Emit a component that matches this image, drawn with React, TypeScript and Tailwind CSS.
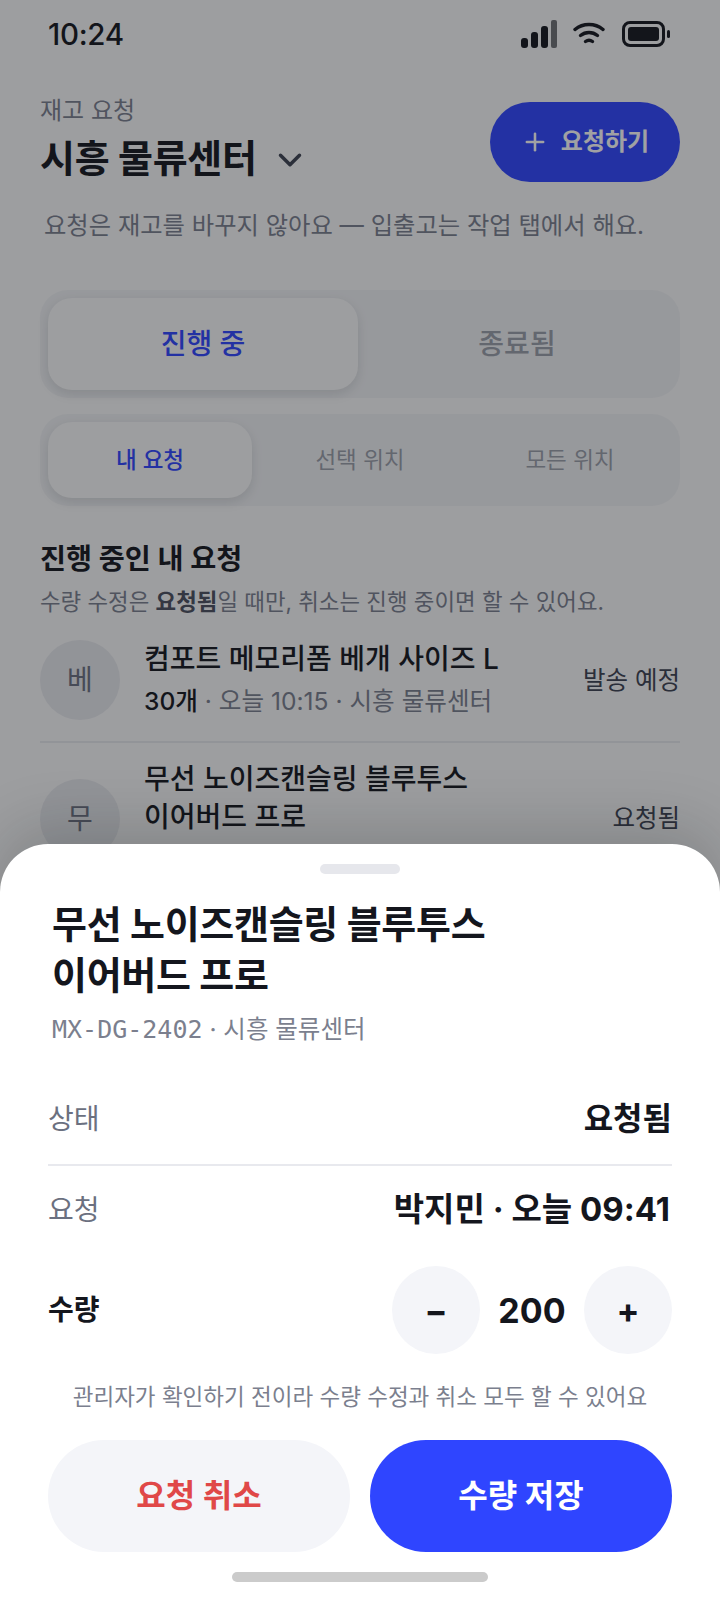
import { ChevronDown, Plus } from "lucide-react"

const sans = "font-[Inter,'Noto_Sans_CJK_KR',sans-serif]"

function StatusIcons() {
  return (
    <div className="flex items-center gap-[16px]">
      <svg width="36" height="28" viewBox="0 0 36 28" fill="#14161d">
        <rect x="0" y="18" width="7" height="10" rx="3" />
        <rect x="10" y="12" width="7" height="16" rx="3" />
        <rect x="20" y="6" width="7" height="22" rx="3" />
        <rect x="30" y="0" width="6" height="28" rx="2" fill="#6f7074" />
      </svg>
      <svg width="32" height="24" viewBox="0 0 32 24" fill="none" stroke="#14161d" strokeWidth="3.4" strokeLinecap="round">
        <path d="M2 7.5C10 .8 22 .8 30 7.5" />
        <path d="M7.5 13.5C12.5 9.5 19.5 9.5 24.5 13.5" />
        <path d="M12.5 19.5C14.5 18 17.5 18 19.5 19.5" />
      </svg>
      <svg width="48" height="26" viewBox="0 0 48 26" fill="none" className="ml-[1px]">
        <rect x="1.5" y="1.5" width="40" height="23" rx="6.5" stroke="#14161d" strokeWidth="3" />
        <rect x="6" y="6" width="31" height="14" rx="3" fill="#14161d" />
        <rect x="45" y="9" width="3" height="8" rx="1.5" fill="#14161d" />
      </svg>
    </div>
  )
}

function Avatar({ label }: { label: string }) {
  return (
    <div className="flex h-[80px] w-[80px] shrink-0 items-center justify-center rounded-full bg-[#e8e9ed] text-[28px] text-[#6b7080]">
      {label}
    </div>
  )
}

export default function App() {
  return (
    <div className={`relative h-[1600px] w-[720px] overflow-hidden bg-[#fafafa] ${sans}`}>
      <div className="flex h-[68px] items-center justify-between pl-[48px] pr-[50px]">
        <span className="text-[29.5px] font-medium tracking-[-0.3px] text-[#14161d]">10:24</span>
        <StatusIcons />
      </div>

      <div className="px-[40px]">
        <div className="flex items-start justify-between pt-[28px]">
          <div>
            <div className="text-[24px] leading-[30px] text-[#7b7f8e]">재고 요청</div>
            <div className="mt-[8px] flex items-center">
              <span className="text-[38px] font-bold leading-[48px] tracking-[-0.3px] text-[#14161d]">시흥 물류센터</span>
              <ChevronDown className="ml-[14px] mt-[3px] text-[#3d4150]" size={38} strokeWidth={2.2} />
            </div>
          </div>
          <div className="mt-[6px] flex h-[80px] w-[190px] items-center justify-center gap-[12px] rounded-full bg-[#2f45ff] text-[24px] font-semibold text-white">
            <Plus size={28} strokeWidth={2.2} />
            <span>요청하기</span>
          </div>
        </div>
        <p className="mt-[27px] pl-[4px] text-[24.3px] leading-[32px] text-[#7b7f8e]">
          요청은 재고를 바꾸지 않아요 — 입출고는 작업 탭에서 해요.
        </p>

        <div className="mt-[49px] flex h-[108px] rounded-[28px] bg-[#f1f2f4] p-[8px]">
          <div className="flex w-[310px] items-center justify-center rounded-[24px] bg-[#fafafa] text-[28px] font-medium text-[#2f45ff] shadow-[0_4px_12px_rgba(20,22,29,0.12)]">
            진행 중
          </div>
          <div className="flex flex-1 items-center justify-center pl-[4px] text-[28px] font-medium text-[#9a9ea9]">종료됨</div>
        </div>

        <div className="mt-[16px] flex h-[92px] rounded-[28px] bg-[#f1f2f4] p-[8px]">
          <div className="flex w-[204px] items-center justify-center rounded-[24px] bg-[#fafafa] text-[22.5px] font-medium text-[#2f45ff] shadow-[0_4px_12px_rgba(20,22,29,0.12)]">
            내 요청
          </div>
          <div className="flex w-[216px] items-center justify-center text-[22.5px] text-[#9a9ea9]">선택 위치</div>
          <div className="flex flex-1 items-center justify-center text-[22.5px] text-[#9a9ea9]">모든 위치</div>
        </div>

        <h2 className="mt-[35px] text-[28.3px] font-bold leading-[36px] text-[#14161d]">진행 중인 내 요청</h2>
        <p className="mt-[9px] text-[22.4px] leading-[32px] text-[#7b7f8e]">
          수량 수정은 <b className="font-bold text-[#4b4f5e]">요청됨</b>일 때만, 취소는 진행 중이면 할 수 있어요.
        </p>

        <div className="mt-[1px]">
          <div className="flex items-center border-b-2 border-[#e8e9ed] py-[21px]">
            <Avatar label="베" />
            <div className="ml-[24px] flex-1">
              <div className="text-[28px] font-medium leading-[36px] text-[#14161d]">컴포트 메모리폼 베개 사이즈 L</div>
              <div className="mt-[6px] text-[24.6px] leading-[36px] text-[#7b7f8e]">
                <span className="font-medium text-[#14161d]">30개</span> · 오늘 10:15 · 시흥 물류센터
              </div>
            </div>
            <span className="text-[24.5px] text-[#3d4150]">발송 예정</span>
          </div>
          <div className="flex items-center py-[17px]">
            <Avatar label="무" />
            <div className="ml-[24px] flex-1">
              <div className="w-[360px] break-keep text-[28px] font-medium leading-[38px] text-[#14161d]">무선 노이즈캔슬링 블루투스 이어버드 프로</div>
              <div className="mt-[5px] text-[24.6px] leading-[36px] text-[#7b7f8e]">200개 · 오늘 09:41 · 시흥 물류센터</div>
            </div>
            <span className="text-[24.5px] text-[#3d4150]">요청됨</span>
          </div>
        </div>
      </div>

      {/* scrim */}
      <div className="absolute inset-0 bg-[rgba(17,20,24,0.4)]" />

      {/* bottom sheet */}
      <div className="absolute bottom-0 left-0 right-0 h-[756px] rounded-t-[48px] bg-white px-[48px] shadow-[0_-16px_60px_rgba(17,20,24,0.18)]">
        <div className="mx-auto mt-[20px] h-[10px] w-[80px] rounded-full bg-[#e6e7ec]" />
        <h1 className="mt-[25px] w-[480px] break-keep pl-[4px] text-[38px] font-bold leading-[51px] tracking-[-0.3px] text-[#14161d]">
          무선 노이즈캔슬링 블루투스 이어버드 프로
        </h1>
        <div className="mt-[12px] h-[32px] pl-[4px] text-[24.5px] leading-[32px] text-[#7b7f8e]">
          <span className="font-['DejaVu_Sans_Mono',monospace] text-[25px] leading-none">MX-DG-2402</span> · 시흥 물류센터
        </div>

        <div className="mt-[29px] flex h-[92px] items-center justify-between border-b-2 border-[#e8e9ee]">
          <span className="text-[28px] text-[#6b7080]">상태</span>
          <span className="text-[32px] font-bold text-[#14161d]">요청됨</span>
        </div>
        <div className="flex h-[88px] items-center justify-between">
          <span className="text-[28px] text-[#6b7080]">요청</span>
          <span className="pr-[2px] text-[33px] font-bold text-[#14161d]">박지민 · 오늘 09:41</span>
        </div>
        <div className="mt-[12px] flex items-center justify-between">
          <span className="text-[28px] font-bold text-[#14161d]">수량</span>
          <div className="flex items-center">
            <button className="flex h-[88px] w-[88px] items-center justify-center rounded-full bg-[#f4f5f9] text-[34px] font-bold text-[#14161d]">−</button>
            <span className="w-[104px] text-center text-[34px] font-bold text-[#14161d]">200</span>
            <button className="flex h-[88px] w-[88px] items-center justify-center rounded-full bg-[#f4f5f9] text-[34px] font-bold text-[#14161d]">+</button>
          </div>
        </div>
        <p className="mt-[27px] text-center text-[22.5px] leading-[32px] text-[#7b7f8e]">
          관리자가 확인하기 전이라 수량 수정과 취소 모두 할 수 있어요
        </p>
        <div className="mt-[27px] flex gap-[20px]">
          <button className="h-[112px] flex-1 rounded-full bg-[#f4f5f9] text-[32px] font-bold text-[#e04848]">요청 취소</button>
          <button className="h-[112px] flex-1 rounded-full bg-[#2f45ff] text-[32px] font-bold text-white">수량 저장</button>
        </div>
        <div className="mx-auto mt-[20px] h-[10px] w-[256px] rounded-full bg-[#cbcbcb]" />
      </div>
    </div>
  )
}
